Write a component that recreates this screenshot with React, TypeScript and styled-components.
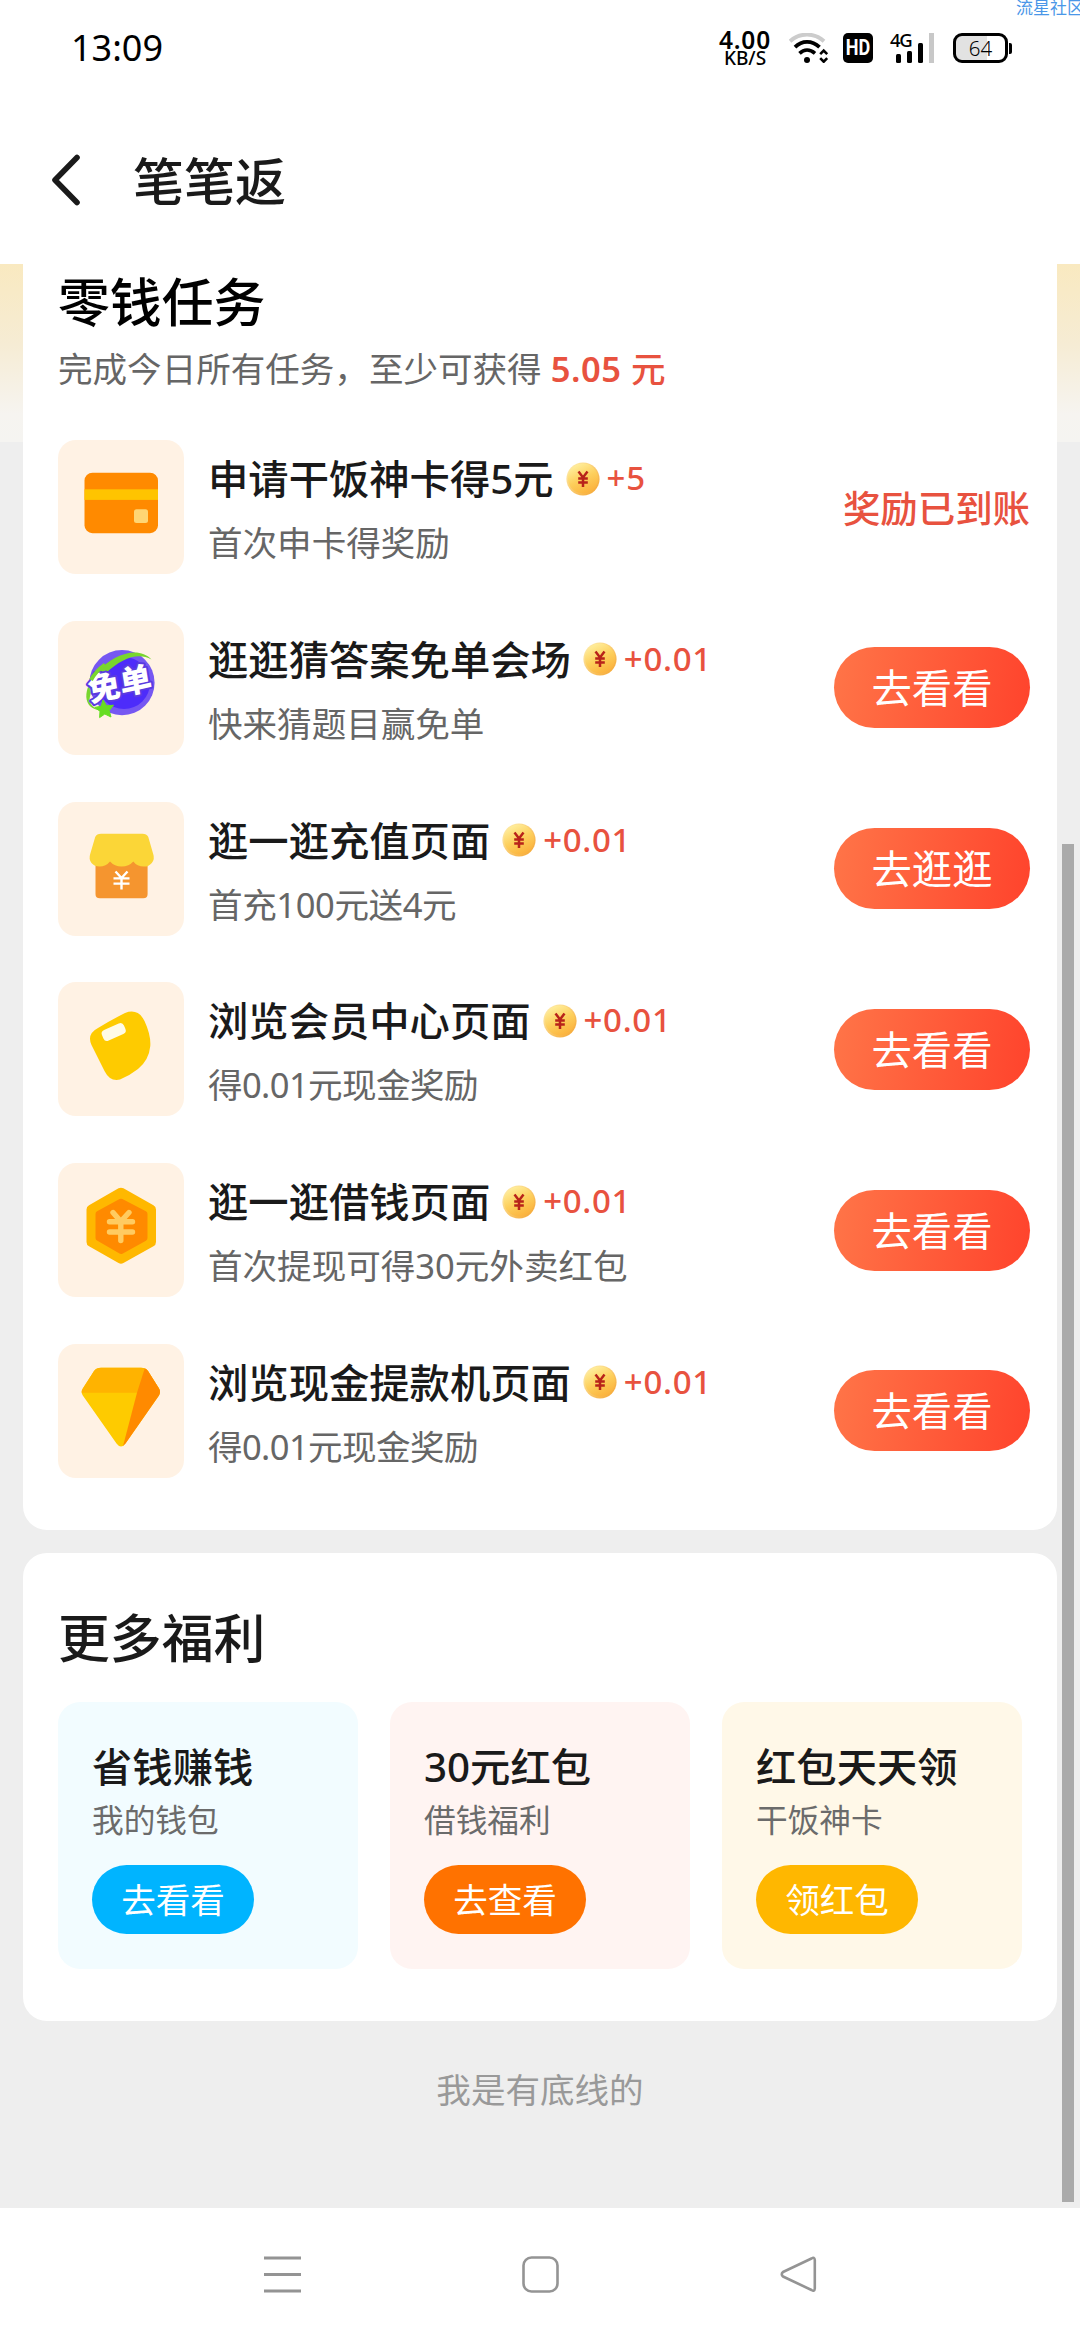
import React from 'react';
import styled, { createGlobalStyle } from 'styled-components';

const GlobalStyle = createGlobalStyle`
  *, *::before, *::after { box-sizing: border-box; }
  html, body { margin: 0; padding: 0; background: #fff; }
  body {
    width: 1080px;
    height: 2340px;
    overflow: hidden;
    font-family: 'Noto Sans', 'Noto Sans CJK SC', sans-serif;
    color: #1a1a1a;
  }
`;

const Screen = styled.div`
  position: relative;
  display: flex;
  flex-direction: column;
  width: 1080px;
  height: 2340px;
  overflow: hidden;
  background: #fff;
`;

/* ---------- status bar ---------- */

const Watermark = styled.div`
  position: absolute;
  top: -3px;
  left: 1016px;
  width: 64px;
  overflow: hidden;
  white-space: nowrap;
  font-size: 17px;
  line-height: 22px;
  color: #4a97e8;
`;

const StatusBar = styled.header`
  display: flex;
  align-items: center;
  justify-content: space-between;
  height: 96px;
  padding: 0 68px 0 71px;
`;

const Clock = styled.time`
  font-size: 36px;
  line-height: 48px;
  color: #000;
`;

const StatusIcons = styled.div`
  display: flex;
  align-items: center;
  height: 48px;
`;

const Speed = styled.div`
  display: flex;
  flex-direction: column;
  align-items: center;
  width: 54px;
  margin-right: 17px;
  color: #000;
  font-weight: 600;
  white-space: nowrap;
`;

const SpeedValue = styled.span`
  font-size: 24.5px;
  line-height: 21px;
  letter-spacing: 0.8px;
`;

const SpeedUnit = styled.span`
  font-size: 19px;
  line-height: 17px;
  font-weight: 500;
`;

const HdBadge = styled.span`
  display: flex;
  align-items: center;
  justify-content: center;
  width: 30px;
  height: 30px;
  margin-left: 14px;
  border-radius: 5px;
  background: #000;
  color: #fff;
  font-family: Roboto, sans-serif;
  font-weight: 700;
  font-size: 22px;
  line-height: 30px;
`;

const NarrowLabel = styled.span`
  transform: scaleX(0.82);
`;

const Signal = styled.span`
  display: flex;
  position: relative;
  width: 45px;
  height: 30px;
  margin: 0 18px 0 17px;
`;

const Generation = styled.span`
  position: absolute;
  left: 0;
  top: -3px;
  font-size: 18.5px;
  line-height: 20px;
  font-weight: 500;
  letter-spacing: -1.4px;
  color: #000;
`;

const Battery = styled.span`
  display: flex;
  align-items: center;
  justify-content: center;
  width: 55px;
  height: 30px;
  border: 3px solid #000;
  border-radius: 9px;
  background: linear-gradient(90deg, #e2e2e2 64%, #fff 64%);
  color: #000;
  font-size: 20.5px;
  line-height: 24px;
  font-weight: 300;
`;

const BatteryTip = styled.span`
  width: 3px;
  height: 11px;
  margin-left: 1px;
  border-radius: 0 2px 2px 0;
  background: #000;
`;

/* ---------- title bar ---------- */

const TitleBar = styled.nav`
  display: flex;
  align-items: center;
  height: 168px;
  padding: 4px 0 0 50px;

  svg { margin: 0 53px 5px 0; }
`;

const PageTitle = styled.h1`
  margin: 0;
  padding-bottom: 2px;
  font-size: 51px;
  line-height: 60px;
  font-weight: 500;
`;

/* ---------- scrolling content ---------- */

const Content = styled.main`
  position: relative;
  height: 1944px;
  padding: 0 23px;
  overflow: hidden;
  background: linear-gradient(180deg, #f9e9c0 0, #f6ecd4 80px, #f6f4f0 150px, #f5f4f1 178px) no-repeat
    0 0 / 100% 178px #eee;
`;

const ScrollThumb = styled.div`
  position: absolute;
  right: 6px;
  top: 580px;
  width: 12px;
  height: 1358px;
  background: #aaa;
`;

const TaskCard = styled.section`
  padding: 12px 27px 52px 35px;
  border-radius: 0 0 24px 24px;
  background: #fff;
`;

const SectionTitle = styled.h2<{ $black?: boolean }>`
  margin: 0;
  font-size: 51.84px;
  line-height: 52px;
  font-weight: 500;
  color: ${(p) => (p.$black ? '#000' : '#1a1a1a')};
`;

const Summary = styled.p`
  margin: 21px 0 51px;
  font-size: 34.56px;
  line-height: 40px;
  color: #666;
  white-space: pre;
`;

const SummaryAmount = styled.span`
  font-weight: 500;
  letter-spacing: 0.5px;
  color: #e8523f;
`;

const AmountDigits = styled.span`
  font-weight: 600;
`;

const TaskList = styled.ul`
  display: flex;
  flex-direction: column;
  gap: 46.8px;
  margin: 0;
  padding: 0;
  list-style: none;
`;

const TaskRow = styled.li`
  display: flex;
  align-items: center;
  height: 134px;
`;

const IconTile = styled.div`
  width: 126px;
  height: 134px;
  margin-right: 24px;
  border-radius: 18px;
  background: #fff2e4;

  svg { display: block; }
`;

const TaskText = styled.div`
  flex: 1;
  align-self: flex-start;
  padding-top: 15px;
`;

const TaskHeading = styled.div`
  display: flex;
  align-items: center;
  height: 48px;
`;

const TaskName = styled.h3`
  margin: 0 12px 0 0;
  font-size: 40.32px;
  line-height: 48px;
  font-weight: 500;
  white-space: nowrap;
`;

const Reward = styled.span`
  margin-left: 7px;
  font-size: 33px;
  line-height: 46px;
  padding-bottom: 2px;
  font-weight: 500;
  letter-spacing: 0.7px;
  color: #e8523f;
`;

const TaskHint = styled.p<{ $tracking?: number }>`
  margin: 19px 0 0;
  font-size: 34.56px;
  line-height: 42px;
  letter-spacing: ${(p) => p.$tracking ?? 0}px;
  color: #666;
`;

const ActionButton = styled.button`
  width: 196px;
  height: 81px;
  padding: 0;
  border: 0;
  border-radius: 41px;
  background: linear-gradient(100deg, #ff7548 0%, #ff5c3a 50%, #ff432c 100%);
  font-family: inherit;
  font-size: 40.32px;
  line-height: 81px;
  color: #fff;
`;

const Claimed = styled.span`
  font-size: 37.44px;
  line-height: 48px;
  font-weight: 500;
  color: #e8523f;
  padding-top: 4px;
`;

/* ---------- benefits ---------- */

const BenefitCard = styled.section`
  margin-top: 23px;
  padding: 59px 35px 52px;
  border-radius: 24px;
  background: #fff;
`;

const BenefitGrid = styled.div`
  display: grid;
  grid-template-columns: repeat(3, 300px);
  gap: 32px;
  margin-top: 38px;
`;

const Benefit = styled.article<{ $bg: string }>`
  display: flex;
  flex-direction: column;
  align-items: flex-start;
  height: 267px;
  padding: 41px 0 0 34px;
  border-radius: 22px;
  background: ${(p) => p.$bg};
`;

const BenefitName = styled.h3`
  margin: 0;
  font-size: 40.32px;
  line-height: 48px;
  font-weight: 500;
`;

const BenefitHint = styled.p`
  margin: 10px 0 26px;
  font-size: 31.68px;
  line-height: 38px;
  color: #6b6b6b;
`;

const BenefitButton = styled.button<{ $color: string }>`
  width: 162px;
  height: 69px;
  padding: 0;
  border: 0;
  border-radius: 35px;
  background: ${(p) => p.$color};
  font-family: inherit;
  font-size: 34.56px;
  line-height: 69px;
  color: #fff;
`;

const EndNote = styled.p`
  margin: 47px 0 0;
  text-align: center;
  font-size: 34.56px;
  line-height: 44px;
  color: #999;
`;

/* ---------- system navigation ---------- */

const SystemNav = styled.footer`
  display: grid;
  grid-template-columns: repeat(3, 258px);
  justify-content: center;
  justify-items: center;
  align-items: center;
  height: 132px;
`;

/* ---------- icons ---------- */

const WifiIcon = () => (
  <svg width="40" height="30" viewBox="0 0 40 30" fill="none">
    <path d="M1 8.2 C11 -0.6 25 -0.6 35 8.2" stroke="#ccc" strokeWidth="4" />
    <path d="M6 14.2 C13 7.2 23 7.2 30.5 14.2" stroke="#000" strokeWidth="3.8" />
    <path d="M10.5 20.4 C15 16 21 16 26 20.4" stroke="#000" strokeWidth="3.6" />
    <circle cx="18" cy="27" r="3" fill="#000" />
    <path d="M31.2 21.2 L34.7 17.7 L38.2 21.2 M31.2 25.2 L34.7 28.7 L38.2 25.2" stroke="#000" strokeWidth="2.6" />
  </svg>
);

const SignalBars = () => (
  <svg width="45" height="30" viewBox="0 0 45 30">
    <rect x="6" y="21" width="5" height="9" rx="1.5" />
    <rect x="17" y="18" width="5" height="12" rx="1.5" />
    <rect x="28" y="10" width="5" height="20" rx="1.5" />
    <rect x="39" y="0" width="5" height="30" fill="#c8c8c8" />
  </svg>
);

const BackIcon = () => (
  <svg width="30" height="54" viewBox="0 0 30 54" fill="none">
    <path d="M27 4.5 L5 27 L27 49.5" stroke="#1a1a1a" strokeWidth="5.6" strokeLinecap="round" strokeLinejoin="round" />
  </svg>
);

const CoinIcon = () => (
  <svg width="34" height="35" viewBox="0 0 34 35" fill="none">
    <defs>
      <linearGradient id="coinFace" x1="0.25" y1="0" x2="0.75" y2="1">
        <stop offset="0" stopColor="#fff0a0" />
        <stop offset="0.5" stopColor="#fdcf5c" />
        <stop offset="1" stopColor="#fbb03a" />
      </linearGradient>
      <linearGradient id="coinRim" x1="0" y1="0" x2="1" y2="1">
        <stop offset="0" stopColor="#fff3b4" />
        <stop offset="1" stopColor="#f5a22a" />
      </linearGradient>
    </defs>
    <circle cx="17" cy="17" r="16.6" fill="url(#coinRim)" />
    <circle cx="17" cy="16.5" r="15" fill="url(#coinFace)" />
    <path
      d="M12.5 9.5 L17 15.5 L21.5 9.5 M12.2 16.6 H21.8 M12.2 20.4 H21.8 M17 15.5 V25"
      stroke="#b8231a"
      strokeWidth="2.5"
    />
  </svg>
);

const TileSvg = ({ children }: { children: React.ReactNode }) => (
  <svg width="126" height="134" viewBox="0 0 126 134" fill="none">
    {children}
  </svg>
);

const CardArt = () => (
  <TileSvg>
    <rect x="26.5" y="32.7" width="73.5" height="60.5" rx="8" fill="#ff8a00" />
    <rect x="26.5" y="49.3" width="73.5" height="10.6" fill="#ffc400" />
    <rect x="76" y="69.3" width="14" height="13.6" rx="2.5" fill="#ffd673" />
  </TileSvg>
);

const FreeOrderArt = () => (
  <TileSvg>
    <circle cx="64" cy="61.7" r="32.6" fill="#7657f2" />
    <circle cx="66" cy="62" r="26" fill="#4d2cfa" />
    <path
      d="M43 89.5 C24 88 24 68 40 50 C55 34 80 24 93.5 38.5 C80 31 64 37 48 52 C30 70 25 84 43 89.5 Z"
      fill="#78d62e"
    />
    <text
      x="64"
      y="74"
      dx="1"
      textAnchor="middle"
      transform="rotate(-12 64 62) skewX(-3)"
      fontFamily="'Noto Sans CJK SC', sans-serif"
      fontSize="32"
      fontWeight="900"
      fill="#fff"
      stroke="#5a3be0"
      strokeWidth="4"
      paintOrder="stroke"
      strokeLinejoin="round"
    >
      免单
    </text>
    <path d="M33 59 Q38 50 47 43.500" stroke="#78d62e" strokeWidth="4" />
    <path
      d="M45 79 L48.6 84.8 L55.5 84.2 L51.2 89.6 L53 96 L46.8 93 L41.6 96.6 L42 90.2 L36.8 86.4 L43.2 85.2 Z"
      fill="#66dd22"
      stroke="#66dd22"
      strokeLinejoin="round"
    />
  </TileSvg>
);

const ShopArt = () => (
  <TileSvg>
    <path d="M37.5 58 H89.6 V92 Q89.6 96.3 85.3 96.3 H41.8 Q37.5 96.3 37.5 92 Z" fill="#f5952f" />
    <path
      d="M43 31.7 H84.5 Q88.5 31.7 90.3 35 L95.2 52 Q97 57 93.8 61 Q90.5 64.8 86 64.6 Q79 64.6 75.3 59.6 Q71 64.6 63.6 64.6 Q56.5 64.6 52 59.6 Q48 64.6 41.5 64.6 Q36.5 64.6 33.5 61 Q30.5 57 32.2 52 L37.2 35 Q38.8 31.7 43 31.7 Z"
      fill="#fbd637"
    />
    <path d="M57.5 69.5 L63.5 76 L69.5 69.5 M55.5 76.4 H71.5 M55.5 81.6 H71.5 M63.5 76 V87.5" stroke="#fff" strokeWidth="2.4" />
  </TileSvg>
);

const BeanArt = () => (
  <TileSvg>
    <path
      d="M40 46 Q53 38 67 31 Q80 26 86.5 39 Q93 53 92.3 64 Q91 78 80 87 Q71 94 62 97.6 Q52 100 46.5 89 L33.5 63 Q28.5 52 40 46 Z"
      fill="#fecb00"
    />
    <rect x="43.7" y="44.3" width="24" height="11.4" rx="4" transform="rotate(-24 55.7 50)" fill="#fffbe6" />
  </TileSvg>
);

const HexArt = () => (
  <TileSvg>
    <path d="M63 29.7 L93 46.5 V79 L63 95.7 L33.5 79 V46.5 Z" fill="#ffb800" stroke="#ffb800" strokeWidth="10" strokeLinejoin="round" />
    <path d="M63 38.7 L86.5 51 V75 L63 88 L40.5 75 V51 Z" fill="#ff8a00" stroke="#ff8a00" strokeWidth="6" strokeLinejoin="round" />
    <path
      d="M55 49.5 L62.8 58.5 L71 49.5 M51.5 58.8 H74.5 M51.5 69 H74.5 M62.8 58.5 V77.5"
      stroke="#ffcb61"
      strokeWidth="5.4"
      strokeLinecap="round"
      strokeLinejoin="round"
    />
  </TileSvg>
);

const DiamondArt = () => (
  <TileSvg>
    <clipPath id="gemShape">
      <path d="M43 23.7 H83 Q87.5 23.7 90 27 L101 44.5 Q103 48 101 51.5 L67.5 99.5 Q63 105.5 58.5 99.5 L24.8 51.5 Q22.5 48 24.8 44.5 L36 27 Q38.5 23.7 43 23.7 Z" />
    </clipPath>
    <g clipPath="url(#gemShape)">
      <rect x="20" y="20" width="90" height="90" fill="#fecb00" />
      <rect x="20" y="20" width="90" height="28.8" fill="#ffb300" />
      <path d="M87.5 22 L79 48.8 L64 106 H110 V22 Z" fill="#ff8a00" />
    </g>
  </TileSvg>
);

const MenuIcon = () => (
  <svg width="37" height="37" viewBox="0 0 37 37" stroke="#949494" strokeWidth="3">
    <path d="M0 2 H37 M0 18.5 H37 M0 35 H37" />
  </svg>
);

const HomeIcon = () => (
  <svg width="37" height="37" viewBox="0 0 37 37" fill="none" stroke="#949494" strokeWidth="2.6">
    <rect x="1.5" y="1.5" width="34" height="34" rx="8" />
  </svg>
);

const NavBackIcon = () => (
  <svg width="37" height="37" viewBox="0 0 37 37" fill="none" stroke="#949494" strokeWidth="2.6" strokeLinejoin="round">
    <path d="M31.5 2.5 Q34.5 0.5 34.8 4 V32.5 Q34.5 36 31.5 34 L3 20.5 Q0.5 18.3 3 16 Z" />
  </svg>
);

/* ---------- data ---------- */

interface Task {
  name: string;
  reward: string;
  hint: string;
  tracking?: number;
  action?: string;
  Art: React.FC;
}

const tasks: Task[] = [
  { name: '申请干饭神卡得5元', reward: '+5', hint: '首次申卡得奖励', Art: CardArt },
  { name: '逛逛猜答案免单会场', reward: '+0.01', hint: '快来猜题目赢免单', action: '去看看', Art: FreeOrderArt },
  { name: '逛一逛充值页面', reward: '+0.01', hint: '首充100元送4元', tracking: -0.4, action: '去逛逛', Art: ShopArt },
  { name: '浏览会员中心页面', reward: '+0.01', hint: '得0.01元现金奖励', tracking: -0.6, action: '去看看', Art: BeanArt },
  { name: '逛一逛借钱页面', reward: '+0.01', hint: '首次提现可得30元外卖红包', action: '去看看', Art: HexArt },
  { name: '浏览现金提款机页面', reward: '+0.01', hint: '得0.01元现金奖励', tracking: -0.6, action: '去看看', Art: DiamondArt },
];

const benefits = [
  { name: '省钱赚钱', hint: '我的钱包', action: '去看看', color: '#00b4ff', bg: '#f2fcff' },
  { name: '30元红包', hint: '借钱福利', action: '去查看', color: '#ff7200', bg: '#fff4f2' },
  { name: '红包天天领', hint: '干饭神卡', action: '领红包', color: '#ffb700', bg: '#fff8e8' },
];

export default function App() {
  return (
    <Screen>
      <GlobalStyle />
      <StatusBar>
        <Clock>13:09</Clock>
        <StatusIcons>
          <Speed>
            <SpeedValue>4.00</SpeedValue>
            <SpeedUnit>KB/S</SpeedUnit>
          </Speed>
          <WifiIcon />
          <HdBadge>
            <NarrowLabel>HD</NarrowLabel>
          </HdBadge>
          <Signal>
            <SignalBars />
            <Generation>4G</Generation>
          </Signal>
          <Battery>64</Battery>
          <BatteryTip />
        </StatusIcons>
      </StatusBar>
      <Watermark>流星社区</Watermark>

      <TitleBar>
        <BackIcon />
        <PageTitle>笔笔返</PageTitle>
      </TitleBar>

      <Content>
        <TaskCard>
          <SectionTitle $black>零钱任务</SectionTitle>
          <Summary>
            完成今日所有任务，至少可获得{' '}
            <SummaryAmount>
              <AmountDigits>5.05</AmountDigits> 元
            </SummaryAmount>
          </Summary>
          <TaskList>
            {tasks.map(({ name, reward, hint, tracking, action, Art }) => (
              <TaskRow key={name}>
                <IconTile>
                  <Art />
                </IconTile>
                <TaskText>
                  <TaskHeading>
                    <TaskName>{name}</TaskName>
                    <CoinIcon />
                    <Reward>{reward}</Reward>
                  </TaskHeading>
                  <TaskHint $tracking={tracking}>{hint}</TaskHint>
                </TaskText>
                {action ? <ActionButton>{action}</ActionButton> : <Claimed>奖励已到账</Claimed>}
              </TaskRow>
            ))}
          </TaskList>
        </TaskCard>

        <BenefitCard>
          <SectionTitle>更多福利</SectionTitle>
          <BenefitGrid>
            {benefits.map((b) => (
              <Benefit key={b.name} $bg={b.bg}>
                <BenefitName>{b.name}</BenefitName>
                <BenefitHint>{b.hint}</BenefitHint>
                <BenefitButton $color={b.color}>{b.action}</BenefitButton>
              </Benefit>
            ))}
          </BenefitGrid>
        </BenefitCard>

        <EndNote>我是有底线的</EndNote>
        <ScrollThumb />
      </Content>

      <SystemNav>
        <MenuIcon />
        <HomeIcon />
        <NavBackIcon />
      </SystemNav>
    </Screen>
  );
}
